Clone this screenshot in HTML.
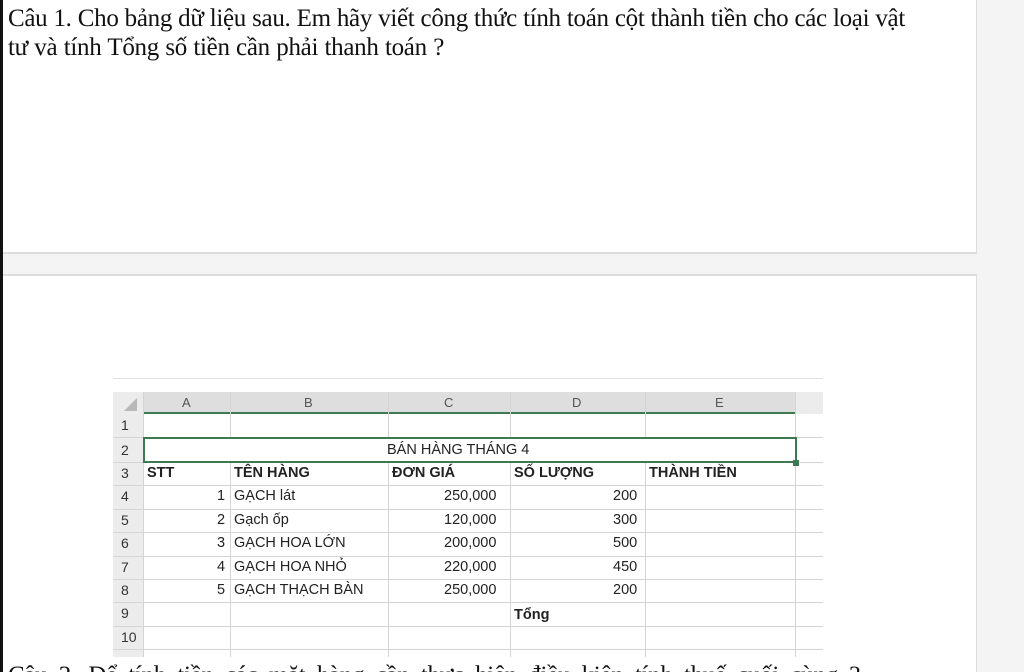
<!DOCTYPE html>
<html><head><meta charset="utf-8"><style>
*{margin:0;padding:0;box-sizing:border-box}
html,body{width:1024px;height:672px;overflow:hidden}
body{background:#f4f4f4;position:relative;font-family:"Liberation Sans",sans-serif}
.abs{position:absolute}
.q{font-family:"Liberation Serif",serif;font-size:25px;color:#111;white-space:nowrap;text-align:justify;text-align-last:justify;height:28px;line-height:28px;letter-spacing:-0.3px}
.c{position:absolute;font-size:14.5px;color:#222;line-height:23px;white-space:nowrap}
.b{font-weight:bold}
.hl{position:absolute;height:1px;background:#d4d4d4;left:113px;width:710px}
.vl{position:absolute;width:1px;background:#d4d4d4;top:392px;height:265px}
.rn{position:absolute;left:113px;width:30px;text-align:left;padding-left:8px;font-size:14px;color:#333;line-height:23px}
</style></head><body>
<div class="abs" style="left:0;top:0;width:3px;height:672px;background:#111"></div>
<div class="abs" style="left:3px;top:0;width:974px;height:254px;background:#fff;border-right:1px solid #ddd;border-bottom:2px solid #ddd"></div>
<div class="abs" style="left:3px;top:274px;width:974px;height:398px;background:#fff;border-right:1px solid #ddd;border-top:2px solid #ddd"></div>
<div class="abs q" style="left:8px;top:5px;width:897px">Câu 1. Cho bảng dữ liệu sau. Em hãy viết công thức tính toán cột thành tiền cho các loại vật</div>
<div class="abs q" style="left:8px;top:34px;width:436px">tư và tính Tổng số tiền cần phải thanh toán ?</div>

<div class="abs" style="left:113px;top:378px;width:710px;height:1px;background:#e2e2e2"></div>
<div class="abs" style="left:143px;top:392px;width:652px;height:22px;background:#dedede;border-bottom:2px solid #3d7a52"></div>
<div class="abs" style="left:113px;top:392px;width:30px;height:265px;background:#ececec"></div>
<div class="abs" style="left:795px;top:392px;width:28px;height:22px;background:#ececec"></div>
<svg class="abs" style="left:122px;top:396px" width="16" height="16"><polygon points="15,2 15,15 2,15" fill="#b8b8b8"/></svg>
<div class="c" style="left:182px;top:392px;color:#555;font-size:13px;line-height:22px">A</div>
<div class="c" style="left:304px;top:392px;color:#555;font-size:13px;line-height:22px">B</div>
<div class="c" style="left:444px;top:392px;color:#555;font-size:13px;line-height:22px">C</div>
<div class="c" style="left:572px;top:392px;color:#555;font-size:13px;line-height:22px">D</div>
<div class="c" style="left:715px;top:392px;color:#555;font-size:13px;line-height:22px">E</div>

<div class="hl" style="top:437px"></div><div class="hl" style="top:462px"></div><div class="hl" style="top:485px"></div>
<div class="hl" style="top:509px"></div><div class="hl" style="top:532px"></div><div class="hl" style="top:556px"></div>
<div class="hl" style="top:579px"></div><div class="hl" style="top:602px"></div><div class="hl" style="top:626px"></div>
<div class="hl" style="top:649px"></div>
<div class="vl" style="left:143px"></div><div class="vl" style="left:230px"></div><div class="vl" style="left:388px"></div>
<div class="vl" style="left:510px"></div><div class="vl" style="left:645px"></div><div class="vl" style="left:795px"></div>

<div class="rn" style="top:414px">1</div><div class="rn" style="top:439px">2</div><div class="rn" style="top:462px">3</div>
<div class="rn" style="top:485px">4</div><div class="rn" style="top:509px">5</div><div class="rn" style="top:532px">6</div>
<div class="rn" style="top:556px">7</div><div class="rn" style="top:579px">8</div><div class="rn" style="top:602px">9</div>
<div class="rn" style="top:626px">10</div>

<div class="abs" style="left:143px;top:437px;width:654px;height:26px;background:#fff;border:2px solid #3d7a52"></div>
<div class="abs" style="left:793px;top:460px;width:6px;height:6px;background:#3d7a52"></div>
<div class="c" style="left:387px;top:439px">BÁN HÀNG THÁNG 4</div>

<div class="c b" style="left:147px;top:462px">STT</div>
<div class="c b" style="left:234px;top:462px">TÊN HÀNG</div>
<div class="c b" style="left:392px;top:462px">ĐƠN GIÁ</div>
<div class="c b" style="left:514px;top:462px">SỐ LƯỢNG</div>
<div class="c b" style="left:649px;top:462px">THÀNH TIỀN</div>

<div class="c" style="left:217px;top:485px">1</div><div class="c" style="left:234px;top:485px">GẠCH lát</div><div class="c" style="left:444px;top:485px">250,000</div><div class="c" style="left:613px;top:485px">200</div>
<div class="c" style="left:217px;top:509px">2</div><div class="c" style="left:234px;top:509px">Gạch ốp</div><div class="c" style="left:444px;top:509px">120,000</div><div class="c" style="left:613px;top:509px">300</div>
<div class="c" style="left:217px;top:532px">3</div><div class="c" style="left:234px;top:532px">GẠCH HOA LỚN</div><div class="c" style="left:444px;top:532px">200,000</div><div class="c" style="left:613px;top:532px">500</div>
<div class="c" style="left:217px;top:556px">4</div><div class="c" style="left:234px;top:556px">GẠCH HOA NHỎ</div><div class="c" style="left:444px;top:556px">220,000</div><div class="c" style="left:613px;top:556px">450</div>
<div class="c" style="left:217px;top:579px">5</div><div class="c" style="left:234px;top:579px">GẠCH THẠCH BÀN</div><div class="c" style="left:444px;top:579px">250,000</div><div class="c" style="left:613px;top:579px">200</div>
<div class="c b" style="left:514px;top:604px">Tổng</div>

<div class="abs q" style="left:8px;top:662px;width:852px">Câu 2. Để tính tiền các mặt hàng cần thực hiện điều kiện tính thuế cuối cùng ?</div>
</body></html>
